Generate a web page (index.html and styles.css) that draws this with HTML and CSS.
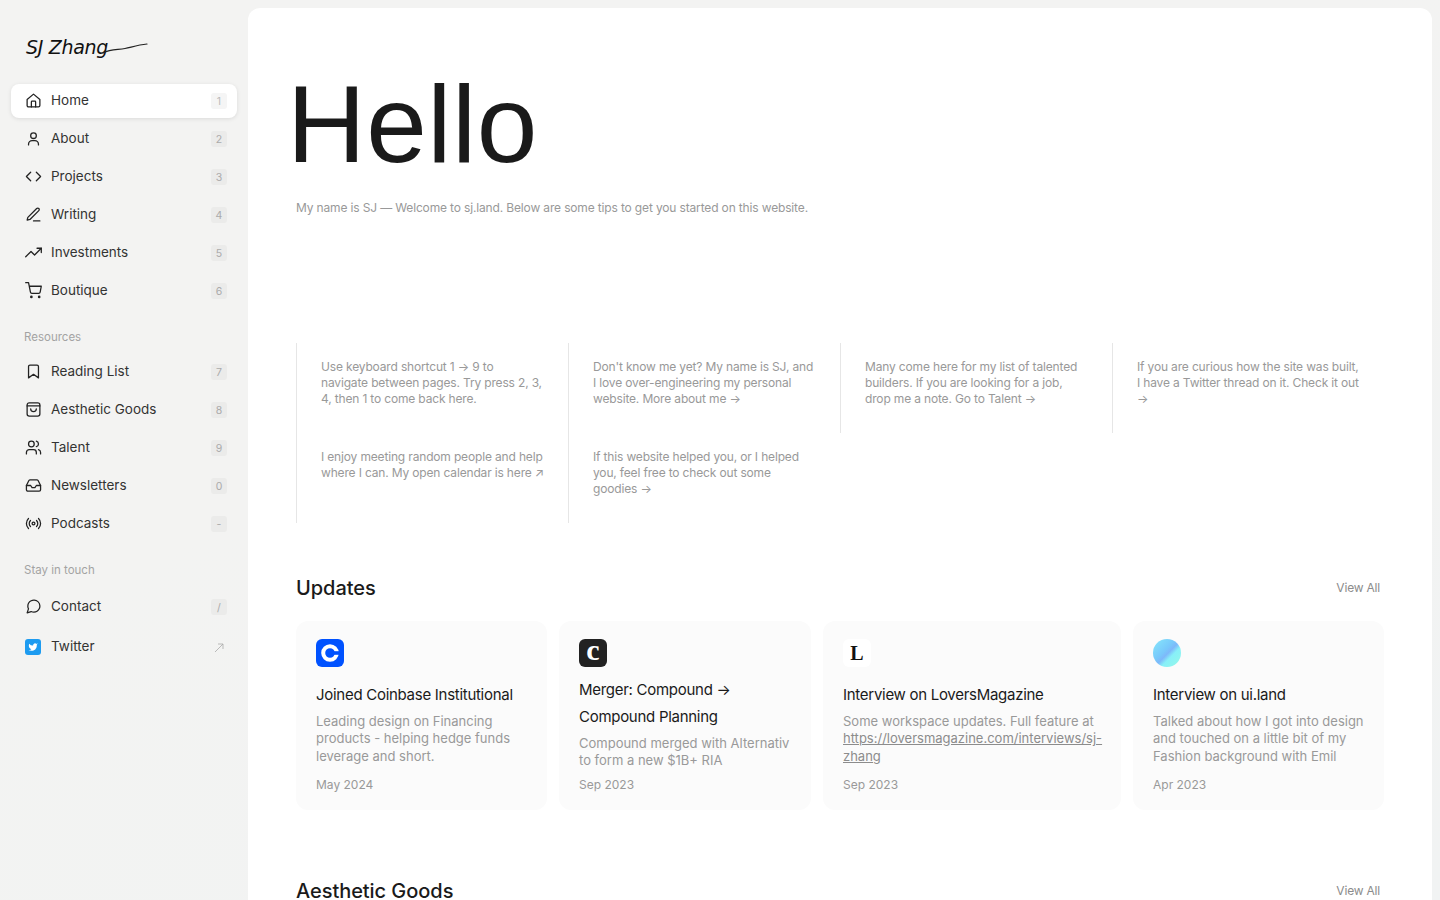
FILE: index.html
```html
<!DOCTYPE html>
<html lang="en">

<head>
    <meta charset="UTF-8">
    <meta name="viewport" content="width=device-width, initial-scale=1.0">
    <title>SJ Zhang</title>
    <link rel="stylesheet" href="styles.css">
</head>

<body>
    <div class="sidebar">
        <div class="logo">
            <span class="logo-text">SJ Zhang</span>
            <svg class="logo-line" width="46" height="14" viewBox="0 0 46 14"><path d="M1 12C9 8 16 9 23 7.500S36 4 45 3"/></svg>
        </div>

        <div class="nav">
            <a class="nav-item active">
                <svg class="icon" viewBox="0 0 24 24"><path d="M3 10.500 12 3l9 7.500V19a2 2 0 0 1-2 2H5a2 2 0 0 1-2-2z"/><path d="M9 21v-7a1 1 0 0 1 1-1h4a1 1 0 0 1 1 1v7"/></svg>
                <span class="nav-label">Home</span><span class="key">1</span>
            </a>
            <a class="nav-item">
                <svg class="icon" viewBox="0 0 24 24"><circle cx="12" cy="8" r="4"/><path d="M5 21v-1a5 5 0 0 1 5-5h4a5 5 0 0 1 5 5v1"/></svg>
                <span class="nav-label">About</span><span class="key">2</span>
            </a>
            <a class="nav-item">
                <svg class="icon" viewBox="0 0 24 24"><polyline points="16 18 22 12 16 6"/><polyline points="8 6 2 12 8 18"/></svg>
                <span class="nav-label">Projects</span><span class="key">3</span>
            </a>
            <a class="nav-item">
                <svg class="icon" viewBox="0 0 24 24"><path d="M12 21h9"/><path d="M16.500 3.500a2.121 2.121 0 0 1 3 3L7 19l-4 1 1-4L16.500 3.500z"/></svg>
                <span class="nav-label">Writing</span><span class="key">4</span>
            </a>
            <a class="nav-item">
                <svg class="icon" viewBox="0 0 24 24"><polyline points="23 6 13.500 15.500 8.500 10.500 1 18"/><polyline points="17 6 23 6 23 12"/></svg>
                <span class="nav-label">Investments</span><span class="key">5</span>
            </a>
            <a class="nav-item">
                <svg class="icon" viewBox="0 0 24 24"><circle cx="9" cy="21" r="1"/><circle cx="20" cy="21" r="1"/><path d="M1 1h4l2.680 13.390a2 2 0 0 0 2 1.610h9.720a2 2 0 0 0 2-1.610L23 6H6"/></svg>
                <span class="nav-label">Boutique</span><span class="key">6</span>
            </a>
        </div>

        <div class="nav-title">Resources</div>
        <div class="nav">
            <a class="nav-item">
                <svg class="icon" viewBox="0 0 24 24"><path d="M19 21l-7-5-7 5V5a2 2 0 0 1 2-2h10a2 2 0 0 1 2 2z"/></svg>
                <span class="nav-label">Reading List</span><span class="key">7</span>
            </a>
            <a class="nav-item">
                <svg class="icon" viewBox="0 0 24 24"><rect x="3" y="2.500" width="18" height="19" rx="3"/><path d="M3 7h18"/><path d="M16 11a4 4 0 0 1-8 0"/></svg>
                <span class="nav-label">Aesthetic Goods</span><span class="key">8</span>
            </a>
            <a class="nav-item">
                <svg class="icon" viewBox="0 0 24 24"><path d="M16 21v-2a4 4 0 0 0-4-4H6a4 4 0 0 0-4 4v2"/><circle cx="9" cy="7" r="4"/><path d="M22 21v-2a4 4 0 0 0-3-3.870"/><path d="M16 3.130a4 4 0 0 1 0 7.750"/></svg>
                <span class="nav-label">Talent</span><span class="key">9</span>
            </a>
            <a class="nav-item">
                <svg class="icon" viewBox="0 0 24 24"><path d="M2 12l3.500-7a2 2 0 0 1 1.800-1h9.400a2 2 0 0 1 1.800 1L22 12v6a2 2 0 0 1-2 2H4a2 2 0 0 1-2-2z"/><path d="M2 12h6l2 3h4l2-3h6"/></svg>
                <span class="nav-label">Newsletters</span><span class="key">0</span>
            </a>
            <a class="nav-item">
                <svg class="icon" viewBox="0 0 24 24"><circle cx="12" cy="12" r="2"/><path d="M16.240 7.760a6 6 0 0 1 0 8.490"/><path d="M7.760 16.240a6 6 0 0 1 0-8.490"/><path d="M19.070 4.930a10 10 0 0 1 0 14.140"/><path d="M4.930 19.070a10 10 0 0 1 0-14.140"/></svg>
                <span class="nav-label">Podcasts</span><span class="key">-</span>
            </a>
        </div>

        <div class="nav-title">Stay in touch</div>
        <div class="nav nav-touch">
            <a class="nav-item">
                <svg class="icon" viewBox="0 0 24 24"><path d="M21 11.500a8.380 8.380 0 0 1-.9 3.800 8.500 8.500 0 0 1-7.600 4.700 8.380 8.380 0 0 1-3.800-.9L3 21l1.900-5.700a8.380 8.380 0 0 1-.9-3.800 8.500 8.500 0 0 1 4.700-7.600 8.380 8.380 0 0 1 3.800-.9h.5a8.480 8.480 0 0 1 8 8v.5z"/></svg>
                <span class="nav-label">Contact</span><span class="key">/</span>
            </a>
            <a class="nav-item">
                <svg class="icon-twitter" viewBox="0 0 16 16"><rect width="16" height="16" rx="3" fill="#1d9bf0"/><path transform="translate(3 3) scale(.42)" fill="#fff" d="M23 3a10.900 10.900 0 0 1-3 1.530 4.480 4.480 0 0 0-7.860 3v1A10.660 10.660 0 0 1 3 4s-4 9 5 13a11.640 11.640 0 0 1-7 2c9 5 20 0 20-11.500a4.500 4.500 0 0 0-.08-.83A7.720 7.720 0 0 0 23 3z"/></svg>
                <span class="nav-label">Twitter</span>
                <svg class="external" viewBox="0 0 10 10"><path d="M1 9 9 1M4 1h5v5"/></svg>
            </a>
        </div>
    </div>

    <div class="main">
        <h1 class="hello">Hello</h1>
        <p class="intro">My name is SJ — Welcome to sj.land. Below are some tips to get you started on this website.</p>

        <div class="tips">
            <div class="tip">Use keyboard shortcut 1 → 9 to<br>navigate between pages. Try press 2, 3,<br>4, then 1 to come back here.</div>
            <div class="tip">Don't know me yet? My name is SJ, and<br>I love over-engineering my personal<br>website. More about me →</div>
            <div class="tip">Many come here for my list of talented<br>builders. If you are looking for a job,<br>drop me a note. Go to Talent →</div>
            <div class="tip">If you are curious how the site was built,<br>I have a Twitter thread on it. Check it out<br>→</div>
            <div class="tip">I enjoy meeting random people and help<br>where I can. My open calendar is here ↗</div>
            <div class="tip">If this website helped you, or I helped<br>you, feel free to check out some<br>goodies →</div>
        </div>

        <div class="section-head">
            <h2>Updates</h2>
            <a class="view-all">View All</a>
        </div>

        <div class="cards">
            <div class="card">
                <svg class="card-logo" viewBox="0 0 28 28"><rect width="28" height="28" rx="6" fill="#0052ff"/><circle cx="14" cy="14" r="6.800" fill="none" stroke="#fff" stroke-width="4"/><rect x="16" y="12.200" width="8" height="3.600" fill="#0052ff"/></svg>
                <div class="card-text">
                    <div class="card-title">Joined Coinbase Institutional</div>
                    <div class="card-desc">Leading design on Financing products - helping hedge funds leverage and short.</div>
                </div>
                <div class="card-date">May 2024</div>
            </div>
            <div class="card">
                <div class="card-logo logo-c">c</div>
                <div class="card-text">
                    <div class="card-title">Merger: Compound → Compound Planning</div>
                    <div class="card-desc">Compound merged with Alternativ to form a new $1B+ RIA</div>
                </div>
                <div class="card-date">Sep 2023</div>
            </div>
            <div class="card">
                <div class="card-logo logo-l">L</div>
                <div class="card-text">
                    <div class="card-title">Interview on LoversMagazine</div>
                    <div class="card-desc">Some workspace updates. Full feature at <a class="card-link">https://loversmagazine.com/interviews/sj-zhang</a></div>
                </div>
                <div class="card-date">Sep 2023</div>
            </div>
            <div class="card">
                <div class="card-logo logo-ui"></div>
                <div class="card-text">
                    <div class="card-title">Interview on ui.land</div>
                    <div class="card-desc">Talked about how I got into design and touched on a little bit of my Fashion background with Emil</div>
                </div>
                <div class="card-date">Apr 2023</div>
            </div>
        </div>

        <div class="section-head section-next">
            <h2>Aesthetic Goods</h2>
            <a class="view-all">View All</a>
        </div>
    </div>
</body>

</html>
```

FILE: styles.css
```css
* {
  margin: 0;
  padding: 0;
  box-sizing: border-box;
}

body {
  display: flex;
  height: 100vh;
  overflow: hidden;
  font-family: "Inter", "Liberation Sans", sans-serif;
  color: #1a1a1a;
  background: linear-gradient(155deg, #f3f3f2 0%, #f3f3f2 40%, #f1f3f3 100%);
}

/* sidebar */
.sidebar {
  width: 248px;
  flex-shrink: 0;
  padding: 0 11px;
}

.logo {
  display: flex;
  align-items: center;
  height: 84px;
  padding: 10px 0 0 15px;
}

.logo-text {
  font-family: "DejaVu Sans ExtraLight", "DejaVu Sans", sans-serif;
  font-style: italic;
  font-size: 19px;
  letter-spacing: -0.3px;
  color: #111;
  white-space: nowrap;
}

.logo-line {
  margin: 2px 0 0 -6px;
  fill: none;
  stroke: #222;
  stroke-width: 1.2;
  stroke-linecap: round;
}

.nav {
  display: flex;
  flex-direction: column;
  gap: 4px;
}

.nav-touch {
  gap: 6px;
}

.nav-item {
  display: flex;
  align-items: center;
  height: 34px;
  padding: 0 10px 0 13.500px;
  border-radius: 8px;
  font-size: 13.500px;
  color: #333;
}

.nav-item.active {
  background-color: white;
  box-shadow: 0 1px 4px rgba(0, 0, 0, 0.1);
}

.icon {
  width: 17px;
  height: 17px;
  margin-bottom: 1px;
  flex-shrink: 0;
  fill: none;
  stroke: #222;
  stroke-width: 1.800;
  stroke-linecap: round;
  stroke-linejoin: round;
}

.icon-twitter {
  width: 16px;
  height: 16px;
  margin: 0 0.500px;
  flex-shrink: 0;
}

.nav-label {
  flex-grow: 1;
  margin-left: 9.500px;
  padding-bottom: 2px;
}

.key {
  width: 16px;
  height: 16px;
  border-radius: 3px;
  background-color: #ebebea;
  color: #aaa;
  font-size: 10.500px;
  line-height: 18px;
  text-align: center;
}

.active .key {
  background-color: #f5f5f5;
  color: #bbb;
}

.external {
  width: 10px;
  height: 10px;
  margin: 2px 3px 0 0;
  fill: none;
  stroke: #aaa;
  stroke-width: 0.8;
}

.nav-title {
  margin: 21px 0 10px 13px;
  font-size: 11.500px;
  line-height: 16px;
  color: #a3a3a3;
}

.nav-title + .nav-touch {
  margin-top: 12px;
}

/* main panel */
.main {
  flex-grow: 1;
  margin: 8px 8px 0 0;
  padding: 62px 48px 0;
  background-color: white;
  border-radius: 12px 12px 0 0;
  overflow: hidden;
}

.hello {
  margin-left: -9px;
  font-family: "Liberation Sans", sans-serif;
  font-weight: 400;
  font-size: 109px;
  line-height: 1;
  letter-spacing: 0.500px;
  color: #1a1a1a;
}

.intro {
  margin-top: 21px;
  font-size: 12px;
  line-height: 16px;
  letter-spacing: -0.15px;
  color: #999;
}

.tips {
  display: grid;
  grid-template-columns: repeat(4, 272px);
  grid-auto-rows: 90px;
  margin-top: 127px;
}

.tip {
  padding: 16px 0 16px 24px;
  border-left: 1px solid #e6e6e6;
  font-size: 12px;
  line-height: 16px;
  letter-spacing: -0.16px;
  white-space: nowrap;
  color: #999;
}

.section-head {
  display: flex;
  justify-content: space-between;
  align-items: center;
  height: 28px;
  margin-top: 51px;
  padding-right: 4px;
}

.section-head h2 {
  font-size: 20px;
  font-weight: 500;
  line-height: 28px;
  letter-spacing: -0.05px;
  color: #1a1a1a;
}

.view-all {
  margin-bottom: 1px;
  font-size: 12px;
  letter-spacing: -0.2px;
  color: #8c8c8c;
}

.section-next {
  margin-top: 67px;
}

.cards {
  display: grid;
  grid-template-columns: 251px 252px 298px 251px;
  gap: 12px;
  margin-top: 19px;
}

.card {
  display: flex;
  flex-direction: column;
  justify-content: space-between;
  height: 189px;
  padding: 18px 20px;
  background-color: #fbfbfb;
  border-radius: 12px;
}

.card-logo {
  display: block;
  width: 28px;
  height: 28px;
  flex-shrink: 0;
}

.logo-c {
  background-color: #222;
  border-radius: 6px;
  font-family: "Liberation Serif", serif;
  font-weight: 700;
  font-size: 30px;
  line-height: 22px;
  text-align: center;
  color: white;
}

.logo-l {
  background-color: white;
  border-radius: 6px;
  font-family: "Liberation Serif", serif;
  font-weight: 700;
  font-size: 20px;
  line-height: 28px;
  text-align: center;
  color: #111;
}

.logo-ui {
  border-radius: 50%;
  background: linear-gradient(135deg, #86e8fb 0%, #78c8fb 42%, #7eb8fa 52%, #88f0f8 64%, #90f5ee 85%, #a0eecc 100%);
}

.card-text {
  padding-top: 1px;
}

.card-title {
  font-size: 15px;
  line-height: 27px;
  letter-spacing: -0.28px;
  color: #1a1a1a;
}

.card-desc {
  margin-top: 4.500px;
  font-size: 13px;
  line-height: 17.500px;
  color: #999;
}

.card-link {
  text-decoration: underline;
  color: #8c8c8c;
}

.card-date {
  font-size: 12px;
  line-height: 14px;
  color: #999;
}
```
